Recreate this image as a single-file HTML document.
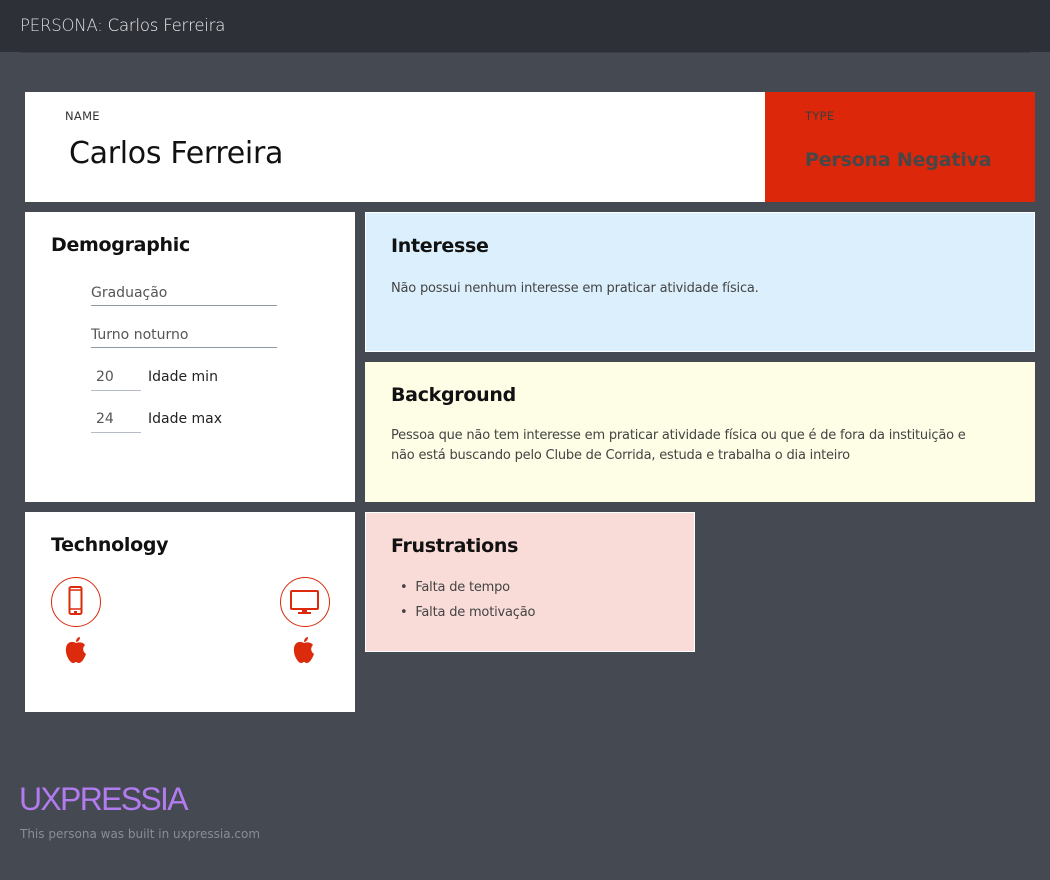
<!DOCTYPE html>
<html><head><meta charset="utf-8"><style>
*{margin:0;padding:0;box-sizing:border-box}
body{width:1050px;height:880px;background:#454952;font-family:"DejaVu Sans","Liberation Sans",sans-serif;position:relative;overflow:hidden}
.hdr{position:absolute;left:0;top:0;width:1050px;height:52px;background:#2e3038}
.hdr span{position:absolute;left:20px;top:16px;font-size:16.5px;color:#d8d8dc;font-weight:300;letter-spacing:-0.2px}
.hline{position:absolute;left:20px;top:52px;width:1010px;height:1px;background:#3a3d45}
.box{position:absolute}
.lbl{position:absolute;font-size:11.5px;color:#333;letter-spacing:0.3px}
h2{position:absolute;left:26px;top:22px;font-size:19px;font-weight:600;color:#111;letter-spacing:-0.3px}
.p{position:absolute;left:26px;font-size:13px;color:#444;line-height:20px;letter-spacing:-0.2px}
.fld{position:absolute;left:66px;width:186px;border-bottom:1px solid #8c97a8;font-size:14px;color:#555;padding-bottom:4px;letter-spacing:0}
.num{position:absolute;left:66px;width:50px;border-bottom:1px solid #b5bcc8;font-size:14px;color:#555;padding:0 0 5px 5px}
.nl{position:absolute;left:123px;font-size:14px;color:#222;letter-spacing:0}
.circ{position:absolute;width:50px;height:50px;border:1.3px solid #dc2a0d;border-radius:50%}
</style></head><body>
<div class="hdr"><span>PERSONA: <span style="position:static;color:#f2f2f2">Carlos Ferreira</span></span></div>
<div class="hline"></div>

<div class="box" style="left:25px;top:92px;width:740px;height:110px;background:#fff">
 <div class="lbl" style="left:40px;top:17px">NAME</div>
 <div style="position:absolute;left:44px;top:44px;font-size:30px;color:#111;letter-spacing:-0.3px">Carlos Ferreira</div>
</div>
<div class="box" style="left:765px;top:92px;width:270px;height:110px;background:#dc270b">
 <div class="lbl" style="left:40px;top:17px;color:#3d3d3d">TYPE</div>
 <div style="position:absolute;left:40px;top:57px;font-size:19px;font-weight:bold;color:#474747;letter-spacing:-0.2px">Persona Negativa</div>
</div>

<div class="box" style="left:25px;top:212px;width:330px;height:290px;background:#fff">
 <h2>Demographic</h2>
 <div class="fld" style="top:73px">Graduação</div>
 <div class="fld" style="top:115px">Turno noturno</div>
 <div class="num" style="top:157px">20</div><div class="nl" style="top:157px">Idade min</div>
 <div class="num" style="top:199px">24</div><div class="nl" style="top:199px">Idade max</div>
</div>

<div class="box" style="left:365px;top:212px;width:670px;height:140px;background:#dbeffc;border:1px solid #fff">
 <h2 style="left:25px">Interesse</h2>
 <div class="p" style="top:66px;left:25px">Não possui nenhum interesse em praticar atividade física.</div>
</div>
<div class="box" style="left:365px;top:362px;width:670px;height:140px;background:#fefde6">
 <h2>Background</h2>
 <div class="p" style="top:64px;width:598px">Pessoa que não tem interesse em praticar atividade física ou que é de fora da instituição e<br>não está buscando pelo Clube de Corrida, estuda e trabalha o dia inteiro</div>
</div>

<div class="box" style="left:25px;top:512px;width:330px;height:200px;background:#fff">
 <h2>Technology</h2>
 <div class="circ" style="left:26px;top:65px"><svg width="50" height="50" viewBox="0 0 50 50" style="position:absolute;left:-1px;top:-1px"><rect x="18.5" y="10" width="12" height="27" rx="1.5" fill="none" stroke="#dc2a0d" stroke-width="2"/><rect x="18.5" y="13" width="12" height="19" fill="none" stroke="#dc2a0d" stroke-width="1.5"/><rect x="23" y="34" width="3" height="2" fill="#dc2a0d"/></svg></div>
 <div class="circ" style="left:255px;top:65px"><svg width="50" height="50" viewBox="0 0 50 50" style="position:absolute;left:-1px;top:-1px"><rect x="11" y="14" width="27" height="18" rx="1" fill="none" stroke="#dc2a0d" stroke-width="2"/><rect x="22" y="32" width="5" height="3" fill="#dc2a0d"/><rect x="18" y="35" width="13" height="2" fill="#dc2a0d"/></svg></div>
 <svg width="24" height="30" viewBox="0 0 24 30" style="position:absolute;left:39px;top:123px"><path d="M12 8 C9 6 3 6 2 13 C1 20 6 28 9 28 C11 28 11 27 12 27 C13 27 13 28 15 28 C18 28 21 22 22 19 C19 17 18 13 21 10 C19 7 15 7 12 8Z M12 7 C12 4 14 2 16 2 C16 5 14 7 12 7Z" fill="#dc2a0d"/></svg>
 <svg width="24" height="30" viewBox="0 0 24 30" style="position:absolute;left:267px;top:123px"><path d="M12 8 C9 6 3 6 2 13 C1 20 6 28 9 28 C11 28 11 27 12 27 C13 27 13 28 15 28 C18 28 21 22 22 19 C19 17 18 13 21 10 C19 7 15 7 12 8Z M12 7 C12 4 14 2 16 2 C16 5 14 7 12 7Z" fill="#dc2a0d"/></svg>
</div>

<div class="box" style="left:365px;top:512px;width:330px;height:140px;background:#f9dcd8;border:1px solid #fff">
 <h2 style="left:25px">Frustrations</h2>
 <div class="p" style="top:62px;left:34px;line-height:25px">
  <div>•&nbsp;&nbsp;Falta de tempo</div>
  <div>•&nbsp;&nbsp;Falta de motivação</div>
 </div>
</div>

<div style="position:absolute;left:19px;top:781px;font-size:32px;color:#b27bf0;font-family:'Liberation Sans',sans-serif;letter-spacing:-1.7px">UXPRESSIA</div>
<div style="position:absolute;left:20px;top:827px;font-size:12px;color:#8a8d95">This persona was built in uxpressia.com</div>
</body></html>
